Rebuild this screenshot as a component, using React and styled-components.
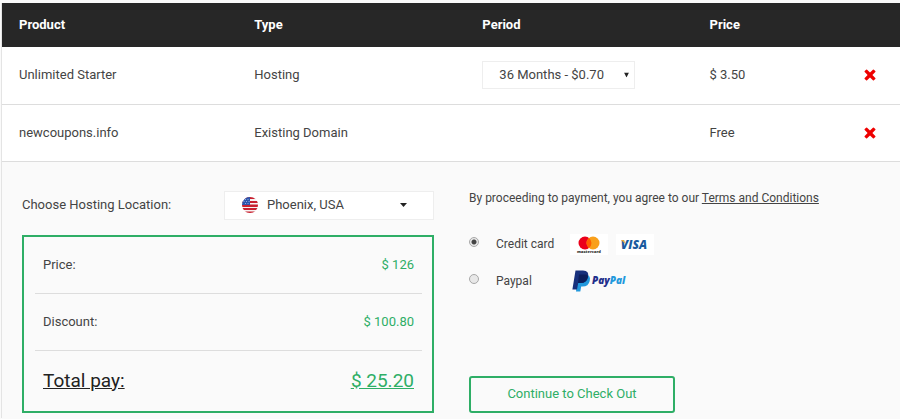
import React from 'react';
import styled, { createGlobalStyle } from 'styled-components';

const items = [
  { name: 'Unlimited Starter', type: 'Hosting', periods: ['36 Months - $0.70'], price: '$ 3.50' },
  { name: 'newcoupons.info', type: 'Existing Domain', price: 'Free' },
];

const RemoveIcon = () => (
  <svg width="12" height="12" viewBox="0 0 12 12" aria-hidden="true">
    <path
      d="M3.1.7 6 3.6 8.9.7q.5-.5 1 0l1.4 1.4q.5.5 0 1L8.4 6l2.9 2.9q.5.5 0 1l-1.4 1.4q-.5.5-1 0L6 8.4l-2.9 2.9q-.5.5-1 0L.7 9.9q-.5-.5 0-1L3.6 6 .7 3.1q-.5-.5 0-1L2.1.7q.5-.5 1 0z"
      fill="#ee0000"
    />
  </svg>
);

const FlagIcon = () => (
  <svg width="16" height="16" viewBox="0 0 16 16" aria-hidden="true">
    <clipPath id="flag-round">
      <circle cx="8" cy="8" r="8" />
    </clipPath>
    <g clipPath="url(#flag-round)">
      <rect width="16" height="16" fill="#f7f3f3" />
      <path d="M0 0h16v2H0zM0 4h16v2H0zM0 7.5h16v2.5H0zM0 11h16v2H0zM0 14.5h16V16H0z" fill="#c8202f" />
      <rect width="8" height="8" fill="#2c55ad" />
      <path
        d="M3 2.5h1M5.5 2.5h1M1.5 4.5h1M4 4.5h1M6.5 4.5h1M3 6.5h1M5.5 6.5h1"
        stroke="#8fabe0"
        strokeWidth="1"
      />
    </g>
  </svg>
);

const MastercardLogo = () => (
  <svg width="38" height="21" viewBox="0 0 38 21" role="img" aria-label="mastercard">
    <rect width="38" height="21" fill="#fff" />
    <circle cx="15" cy="9" r="6.5" fill="#eb001b" />
    <circle cx="23" cy="9" r="6.5" fill="#f9a01b" />
    <path d="M19 3.9a6.5 6.5 0 0 1 0 10.2a6.5 6.5 0 0 1 0-10.2z" fill="#ff5f00" />
    <LogoText x="19" y="19" textAnchor="middle" size={4} fill="#333">
      mastercard
    </LogoText>
  </svg>
);

const VisaLogo = () => (
  <svg width="38" height="21" viewBox="0 0 38 21" role="img" aria-label="Visa">
    <rect width="38" height="21" fill="#fff" />
    <LogoText x="18" y="15" textAnchor="middle" size={12} fill="#1a5a9e" slanted>
      VISA
    </LogoText>
    <path d="M5 6h3l1.5 4z" fill="#e8a83a" />
  </svg>
);

const PaypalLogo = () => (
  <svg width="58" height="22" viewBox="-2 0 58 22" role="img" aria-label="PayPal">
    <path
      d="M6 4.5h8.5q4.5 1 3.2 6.5q-1.2 5.5-7.2 5.5h-1.3l-.9 5H4z"
      fill="#2298dc"
    />
    <path
      d="M3.5.5h7.5q6.5 0 5 6.5q-1.3 6-7.5 6H6.2L5 19.5H.4z"
      fill="#17307c"
    />
    <path d="M7 4.5h7.5q1.6.6 1.5 2.5q-1.3 6-7.5 6H6z" fill="#0c1f5c" />
    <LogoText x="20" y="14" size={10} fill="#1f2f8c" slanted>
      Pay<tspan fill="#2298dc">Pal</tspan>
    </LogoText>
  </svg>
);

const CartTable = () => (
  <Table>
    <thead>
      <tr>
        <HeadCell width="26.2%">Product</HeadCell>
        <HeadCell width="25.4%">Type</HeadCell>
        <HeadCell width="25.3%">Period</HeadCell>
        <HeadCell>Price</HeadCell>
        <HeadCell width="44px" aria-label="Remove" />
      </tr>
    </thead>
    <tbody>
      {items.map(item => (
        <tr key={item.name}>
          <Cell>{item.name}</Cell>
          <Cell>{item.type}</Cell>
          <Cell>
            {item.periods && (
              <SelectWrap period>
                <Select period aria-label="Period">
                  {item.periods.map(period => (
                    <option key={period}>{period}</option>
                  ))}
                </Select>
                <Arrow viewBox="0 0 5 5" width="5" height="5" right={6}>
                  <path d="M0 0h5L2.5 5z" />
                </Arrow>
              </SelectWrap>
            )}
          </Cell>
          <Cell>{item.price}</Cell>
          <Cell action>
            <RemoveButton type="button" aria-label={`Remove ${item.name}`}>
              <RemoveIcon />
            </RemoveButton>
          </Cell>
        </tr>
      ))}
    </tbody>
  </Table>
);

const App = () => (
  <>
    <GlobalStyle />
    <Page>
      <CartTable />
      <Checkout>
        <div>
          <LocationRow>
            <label htmlFor="location">Choose Hosting Location:</label>
            <SelectWrap>
              <FlagSlot>
                <FlagIcon />
              </FlagSlot>
              <Select id="location">
                <option>Phoenix, USA</option>
              </Select>
              <Arrow viewBox="0 0 7 4" width="7" height="4" right={27}>
                <path d="M0 0h7L3.5 4z" />
              </Arrow>
            </SelectWrap>
          </LocationRow>
          <Summary>
            <SummaryRow>
              <dt>Price:</dt>
              <Amount>$ 126</Amount>
            </SummaryRow>
            <SummaryRow>
              <dt>Discount:</dt>
              <Amount>$ 100.80</Amount>
            </SummaryRow>
            <SummaryRow total>
              <dt>Total pay:</dt>
              <Amount>$ 25.20</Amount>
            </SummaryRow>
          </Summary>
        </div>
        <Payment>
          <Terms>
            By proceeding to payment, you agree to our <a href="#terms">Terms and Conditions</a>
          </Terms>
          <Method>
            <Radio type="radio" name="method" defaultChecked />
            <MethodName>Credit card</MethodName>
            <Logos>
              <MastercardLogo />
              <VisaLogo />
            </Logos>
          </Method>
          <Method>
            <Radio type="radio" name="method" />
            <MethodName>Paypal</MethodName>
            <Logos>
              <PaypalLogo />
            </Logos>
          </Method>
          <CheckoutButton type="button">Continue to Check Out</CheckoutButton>
        </Payment>
      </Checkout>
    </Page>
  </>
);

const GlobalStyle = createGlobalStyle`
  * {
    box-sizing: border-box;
  }
  body {
    margin: 0;
    background: #fafafa;
    color: #444;
    font-family: Roboto, "Liberation Sans", sans-serif;
    font-size: 13px;
    line-height: 20px;
  }
  svg {
    display: block;
  }
`;

const Page = styled.main`
  margin: 3px 0 0 1px;
  border-left: 1px solid #e4e4e4;
`;

const Table = styled.table`
  width: 100%;
  table-layout: fixed;
  border-collapse: collapse;
  background: #fff;
`;

const HeadCell = styled.th`
  width: ${props => props.width || 'auto'};
  height: 44px;
  padding: 0 0 0 17px;
  background: #272727;
  color: #fff;
  font-weight: 700;
  text-align: left;
`;

const Cell = styled.td`
  height: 57px;
  padding: ${props => (props.action ? '0' : '0 0 0 17px')};
  border-bottom: 1px solid #ddd;
`;

const RemoveButton = styled.button`
  display: block;
  padding: 8px;
  border: 0;
  background: none;
  cursor: pointer;
`;

const SelectWrap = styled.div`
  position: relative;
  width: ${props => (props.period ? '153px' : '210px')};
`;

const Select = styled.select`
  appearance: none;
  display: block;
  width: 100%;
  height: ${props => (props.period ? '28px' : '29px')};
  padding: ${props => (props.period ? '0 20px 0 16px' : '0 40px 0 42px')};
  border: 1px solid #eee;
  border-radius: 0;
  background: #fff;
  color: inherit;
  font: inherit;
`;

const Arrow = styled.svg`
  position: absolute;
  top: 50%;
  right: ${props => props.right}px;
  transform: translateY(-50%);
  fill: #222;
  pointer-events: none;
`;

const FlagSlot = styled.span`
  position: absolute;
  top: 6px;
  left: 18px;
  pointer-events: none;
`;

const Checkout = styled.section`
  display: grid;
  grid-template-columns: 1fr 1fr;
  gap: 35px;
  padding: 26px 19px 5px 20px;
`;

const LocationRow = styled.div`
  display: flex;
  align-items: center;
  justify-content: space-between;
  padding-top: 3px;
`;

const Summary = styled.dl`
  margin: 15px 0 0;
  padding: 0 10px 0 11px;
  border: 2px solid #2eae66;
`;

const SummaryRow = styled.div`
  display: flex;
  align-items: center;
  justify-content: space-between;
  height: ${props => (props.total ? '60px' : '57px')};
  padding: 0 8px;
  border-bottom: ${props => (props.total ? '0' : '1px solid #ddd')};
  font-size: ${props => (props.total ? '19px' : '13px')};
  text-decoration: ${props => (props.total ? 'underline' : 'none')};
  color: ${props => (props.total ? '#222' : 'inherit')};
`;

const Amount = styled.dd`
  margin: 0;
  color: #2eae66;
  text-decoration: inherit;
`;

const Payment = styled.div`
  display: flex;
  flex-direction: column;
  align-items: flex-start;
  font-size: 12px;
`;

const Terms = styled.p`
  margin: 0 0 18px;

  a {
    color: inherit;
  }
`;

const Method = styled.label`
  display: flex;
  align-items: center;
  height: 37px;
`;

const Radio = styled.input`
  appearance: none;
  width: 10px;
  height: 10px;
  margin: 0 17px 4px 0;
  border: 1px solid #a8a8a8;
  border-radius: 50%;
  background: #e8e8e8;

  &:checked {
    background: radial-gradient(circle, #444 2px, #e8e8e8 3px);
  }
`;

const MethodName = styled.span`
  width: 74px;
`;

const Logos = styled.span`
  display: flex;
  gap: 8px;
`;

const LogoText = styled.text`
  font-family: "Open Sans", sans-serif;
  font-size: ${props => props.size}px;
  font-weight: 800;
  font-style: ${props => (props.slanted ? 'italic' : 'normal')};
`;

const CheckoutButton = styled.button`
  width: 206px;
  height: 37px;
  margin-top: auto;
  border: 2px solid #2eae66;
  border-radius: 3px;
  background: none;
  color: #2eae66;
  font: inherit;
  font-size: 13px;
  cursor: pointer;
`;

export default App;
